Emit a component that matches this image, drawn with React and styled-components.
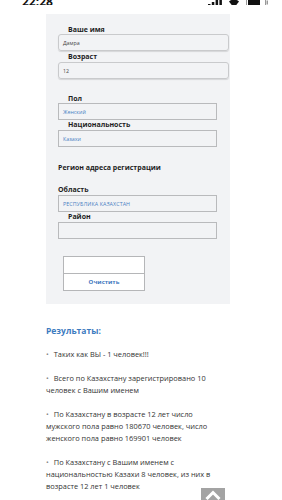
import styled, { createGlobalStyle } from 'styled-components'

const Global = createGlobalStyle`
  body {
    margin: 0;
    background: #fff;
    font-family: "Open Sans", "Noto Sans", sans-serif;
    color: #2b2b2b;
    overflow: hidden;
  }
`

const Page = styled.div`
  width: 282px;
  height: 500px;
  position: relative;
  overflow: hidden;
`

const StatusBar = styled.div`
  height: 5px;
  overflow: hidden;
  display: flex;
  align-items: flex-end;
  justify-content: space-between;
  padding: 0 14px 0 22px;
`

const Clock = styled.span`
  font-size: 12px;
  font-weight: 700;
  line-height: 12px;
  margin-bottom: -3px;
  color: #111;
`

const StatusIcons = styled.div`
  display: flex;
  gap: 6px;
  align-items: flex-end;
  margin-bottom: -3px;
`

const Panel = styled.section`
  width: 184px;
  margin: 9px 0 0 46px;
  background: #f2f3f5;
  padding: 12px 1px 13px 12px;
  box-sizing: border-box;
`

const Label = styled.div`
  font-size: 7px;
  line-height: 8px;
  font-weight: 700;
  color: #1e1e1e;
  padding-left: ${p => (p.$flush ? 0 : 10)}px;
  margin-top: ${p => p.$top || 0}px;
`

const Field = styled.div`
  height: 17px;
  box-sizing: border-box;
  width: ${p => (p.$rounded ? 171 : 159)}px;
  margin-top: ${p => p.$top ?? 0}px;
  border: 1px solid ${p => (p.$rounded ? '#c9cacc' : '#b9babc')};
  border-radius: ${p => (p.$rounded ? 3 : 0)}px;
  box-shadow: ${p => (p.$rounded ? '0 1px 1px rgba(0,0,0,0.12)' : 'none')};
  display: flex;
  align-items: center;
  padding-left: 4px;
  font-size: 5.3px;
  color: ${p => (p.$blue ? '#4a7fc3' : '#444')};
  letter-spacing: ${p => (p.$caps ? '0.1px' : 0)};
`

const Buttons = styled.div`
  width: 80px;
  margin: 17px 0 0 5px;
  display: flex;
  flex-direction: column;
  border: 1px solid #b5b6b8;
  background: #fff;
`

const Cell = styled.div`
  height: 16px;
  display: flex;
  align-items: center;
  justify-content: center;
  font-size: 6px;
  font-weight: 700;
  color: #3f78c0;
  border-top: ${p => (p.$split ? '1px solid #b5b6b8' : 'none')};
`

const Results = styled.section`
  width: 182px;
  margin: 21px 0 0 46px;
`

const Title = styled.h3`
  margin: 0 0 11px;
  font-size: 8.5px;
  line-height: 12px;
  font-weight: 700;
  color: #3c7bbf;
`

const Item = styled.p`
  margin: 0 0 12px;
  font-size: 7.4px;
  line-height: 12px;
  color: #333;
`

const Dot = styled.span`
  color: #8a8a8a;
  margin-right: 5px;
`

const ScrollTop = styled.div`
  position: absolute;
  left: 201px;
  top: 488px;
  width: 24px;
  height: 24px;
  background: #a3a3a3;
  display: flex;
  justify-content: center;
  padding-top: 2px;
  box-sizing: border-box;
`

const items = [
  'Таких как ВЫ - 1 человек!!!',
  'Всего по Казахстану зарегистрировано 10 человек с Вашим именем',
  'По Казахстану в возрасте 12 лет число мужского пола равно 180670 человек, число женского пола равно 169901 человек',
  'По Казахстану с Вашим именем с национальностью Казахи 8 человек, из них в возрасте 12 лет 1 человек',
]

const App = () => {
  return <Page>
    <Global />
    <StatusBar>
      <Clock>22:28</Clock>
      <StatusIcons>
        <svg width="14" height="10" viewBox="0 0 14 10">
          <rect x="0" y="6" width="2.5" height="4" fill="#111" />
          <rect x="3.8" y="4" width="2.5" height="6" fill="#111" />
          <rect x="7.6" y="2" width="2.5" height="8" fill="#111" />
          <rect x="11.4" y="0" width="2.5" height="10" fill="#111" />
        </svg>
        <svg width="12" height="10" viewBox="0 0 12 10">
          <path d="M1 3.5 A7.5 7.5 0 0 1 11 3.5 L6 10 Z" fill="#111" />
        </svg>
        <svg width="22" height="11" viewBox="0 0 22 11">
          <rect x="0.5" y="0.5" width="19" height="10" rx="2.5" fill="none" stroke="#999" />
          <rect x="2" y="2" width="12" height="7" rx="1.2" fill="#111" />
          <rect x="20.5" y="3.5" width="1.5" height="4" fill="#999" />
        </svg>
      </StatusIcons>
    </StatusBar>

    <Panel>
      <Label>Ваше имя</Label>
      <Field $rounded>Дамра</Field>
      <Label $top={2}>Возраст</Label>
      <Field $rounded $top={1}>12</Field>

      <Label $top={16}>Пол</Label>
      <Field $blue>Женский</Field>
      <Label $top={1}>Национальность</Label>
      <Field $blue $top={1}>Казахи</Field>

      <Label $flush $top={17}>Регион адреса регистрации</Label>

      <Label $flush $top={14}>Область</Label>
      <Field $blue $caps $top={1}>РЕСПУБЛИКА КАЗАХСТАН</Field>
      <Label $top={1}>Район</Label>
      <Field $top={1} />

      <Buttons>
        <Cell />
        <Cell $split>Очистить</Cell>
      </Buttons>
    </Panel>

    <Results>
      <Title>Результаты:</Title>
      {items.map((text, i) => (
        <Item key={i}><Dot>•</Dot>{text}</Item>
      ))}
    </Results>

    <ScrollTop>
      <svg width="16" height="10" viewBox="0 0 16 10">
        <path d="M1.5 9 L8 2.5 L14.5 9" fill="none" stroke="#fff" strokeWidth="3" />
      </svg>
    </ScrollTop>
  </Page>
}

export default App
